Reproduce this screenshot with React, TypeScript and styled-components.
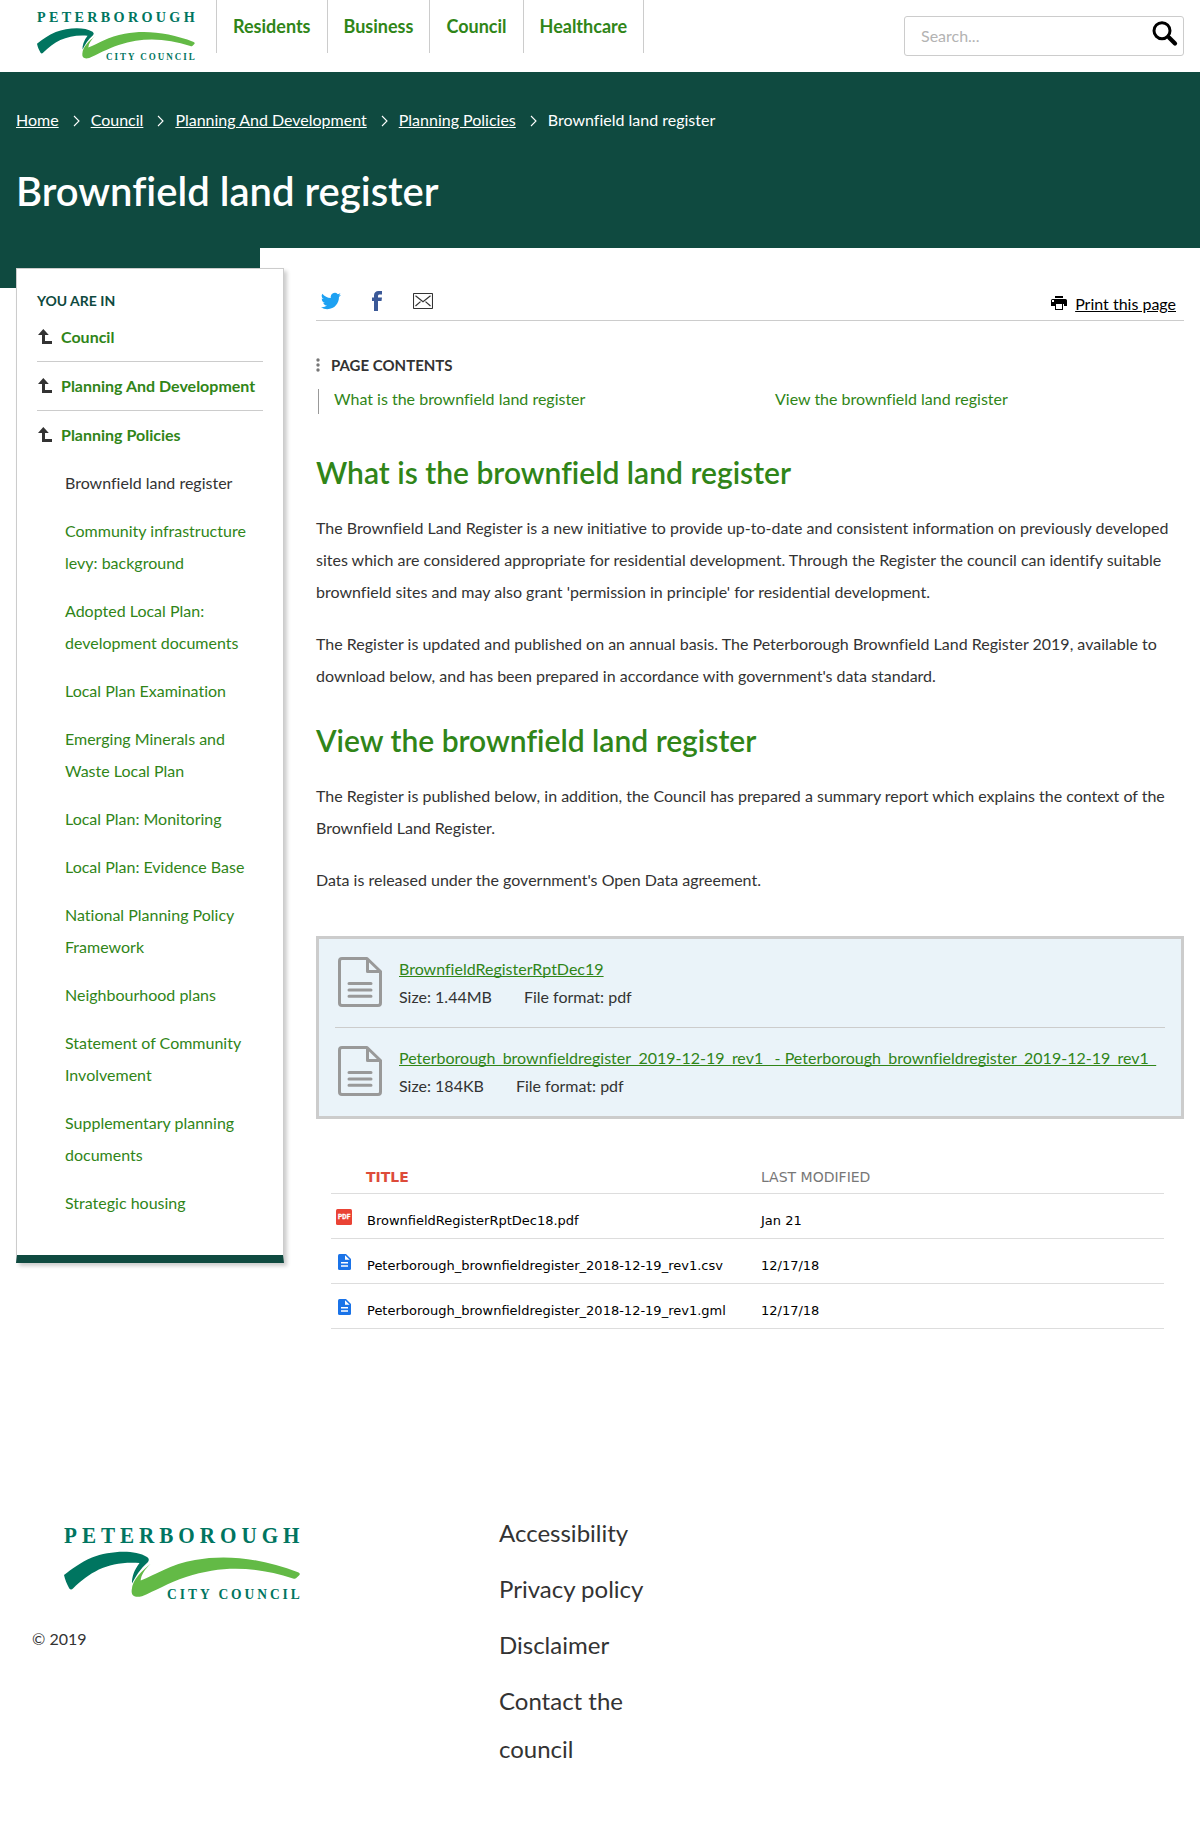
import React from 'react';
import styled, { createGlobalStyle } from 'styled-components';

const GREEN = '#308518';
const DARK = '#0f4a40';
const INK = '#333';
const LINE = '#ccc';

const GlobalStyle = createGlobalStyle`
  *, *::before, *::after { box-sizing: border-box; }
  body {
    margin: 0;
    background: #fff;
    color: ${INK};
    font: 16px/32px Lato, sans-serif;
    font-variant-ligatures: none;
  }
  a { color: ${GREEN}; text-decoration: none; }
  h1, h2, h3, p, ul { margin: 0; padding: 0; }
  ul { list-style: none; }
  svg { display: block; flex: none; }
`;

const Header = styled.header`
  display: flex;
  align-items: flex-start;
  height: 72px;
  padding: 0 16px 0 37px;
`;

const HeaderLogo = styled.a`
  padding-top: 11px;
  margin-right: 21px;
`;

const Nav = styled.nav`
  display: flex;
  height: 53px;
  border-left: 1px solid ${LINE};
`;

const NavLink = styled.a`
  padding: 10px 16px 0;
  border-right: 1px solid ${LINE};
  font-size: 18px;
  font-weight: 700;
`;

const SearchForm = styled.form`
  display: flex;
  width: 280px;
  height: 40px;
  margin: 16px 0 0 auto;
  border: 1px solid ${LINE};
  border-radius: 3px;
`;

const SearchInput = styled.input`
  flex: 1;
  min-width: 0;
  padding: 0 0 2px 16px;
  border: 0;
  background: none;
  font: 16px Lato, sans-serif;
  &::placeholder { color: #b3b3b3; opacity: 1; }
`;

const SearchButton = styled.button`
  display: flex;
  align-items: flex-start;
  width: 31px;
  padding: 4px 0 0 0;
  border: 0;
  background: none;
`;

const Hero = styled.section`
  height: 176px;
  padding: 32px 16px 0;
  background: ${DARK};
  color: #fff;
`;

const Crumbs = styled.ul`
  display: flex;
  height: 32px;
`;

const Crumb = styled.li`
  display: flex;
  align-items: center;
  a { color: #fff; text-decoration: underline; }
  svg { margin: 2px 11px 0 14px; }
`;

const PageTitle = styled.h1`
  margin-top: 25px;
  font-size: 40px;
  line-height: 60px;
  font-weight: 600;
`;

const Columns = styled.div`
  display: flex;
  align-items: flex-start;
  padding: 0 16px 0 0;
`;

const SideColumn = styled.div`
  width: 316px;
  padding: 20px 32px 0 16px;
  background: linear-gradient(${DARK}, ${DARK}) 0 0 / 260px 40px no-repeat;
`;

const SideCard = styled.aside`
  height: 995px;
  padding: 16px 20px 0;
  background: #fff;
  border: 1px solid ${LINE};
  border-bottom: 8px solid ${DARK};
  box-shadow: 3px 3px 4px rgba(0, 0, 0, 0.2);
`;

const SideHeading = styled.h3`
  color: ${DARK};
  font-size: 14px;
  font-weight: 700;
`;

const Parent = styled.li<{ $last?: boolean }>`
  display: flex;
  align-items: center;
  height: ${(p) => (p.$last ? 48 : 49)}px;
  border-bottom: ${(p) => (p.$last ? '0' : `1px solid ${LINE}`)};
  font-weight: 700;
  svg { margin: 0 9px 2px 1px; }
  &:first-child { height: 45px; padding-bottom: 4px; }
`;

const Child = styled.li<{ $current?: boolean }>`
  padding: 8px 0 8px 28px;
  color: ${(p) => (p.$current ? INK : GREEN)};
`;

const Main = styled.main`
  flex: 1;
  min-width: 0;
  padding-top: 36px;
`;

const ShareBar = styled.div`
  display: flex;
  justify-content: space-between;
  height: 37px;
  padding: 4px 8px 0 5px;
  border-bottom: 1px solid ${LINE};
`;

const ShareLinks = styled.div`
  display: flex;
  align-items: flex-start;
  padding-top: 3px;
  svg + svg { margin-left: 27px; }
  svg:last-child { margin: 2px 0 0 25px; }
`;

const PrintLink = styled.a`
  display: flex;
  gap: 8px;
  color: #000;
  span { text-decoration: underline; }
  svg { margin-top: 8px; }
`;

const ContentsHeading = styled.h3`
  display: flex;
  align-items: center;
  gap: 11px;
  margin-top: 28px;
  font-size: 15px;
  font-weight: 700;
`;

const ContentsList = styled.ul`
  display: grid;
  grid-template-columns: 441px 1fr;
  height: 25px;
  margin: 8px 0 0 2px;
  padding-left: 15px;
  border-left: 1px solid #999;
  line-height: 20px;
`;

const SectionTitle = styled.h2<{ $top: number }>`
  margin: ${(p) => p.$top}px 0 16px;
  color: ${GREEN};
  font-size: 30px;
  line-height: 48px;
  font-weight: 600;
`;

const Paragraph = styled.p`
  margin-bottom: 20px;
`;

const Downloads = styled.ul`
  margin-top: 40px;
  padding: 0 16px;
  border: 3px solid ${LINE};
  background: #eaf3f9;
`;

const Download = styled.li`
  display: flex;
  gap: 17px;
  height: 88px;
  padding: 18px 0 0 3px;
  white-space: nowrap;
  & + & { height: 89px; border-top: 1px solid ${LINE}; }
`;

const DownloadText = styled.div`
  margin-top: -2px;
  line-height: 28px;
  a { text-decoration: underline; text-decoration-skip-ink: none; }
`;

const Meta = styled.div`
  display: flex;
  gap: 32px;
`;

const FileTable = styled.div`
  width: 833px;
  margin: 49px 0 0 15px;
  font: 13px/20px 'DejaVu Sans', sans-serif;
  color: #000;
`;

const FileRow = styled.div`
  display: grid;
  grid-template-columns: 36px 394px 1fr;
  height: 45px;
  padding-top: 17px;
  border-bottom: 1px solid #ddd;
  svg { margin: -2px 0 0 5px; }
`;

const FileHead = styled(FileRow)`
  height: 26px;
  padding-top: 0;
  font-size: 14px;
  line-height: 18px;
`;

const HeadTitle = styled.span`
  margin-left: -1px;
  color: #dd4b39;
  font-weight: 700;
`;

const HeadDate = styled.span`
  color: #777;
`;

const Footer = styled.footer`
  display: grid;
  grid-template-columns: 467px 160px;
  height: 504px;
  padding: 180px 0 0 32px;
`;

const FooterLogo = styled.div`
  padding: 17px 0 0 32px;
  margin-bottom: 23px;
`;

const FooterLinks = styled.ul`
  font-size: 24px;
  line-height: 48px;
  li { margin-bottom: 8px; }
`;

const LogoSvg = styled.svg`
  overflow: visible;
  font-family: 'Liberation Serif', serif;
  font-weight: 700;
`;

function Logo({ width, height }: { width: number; height: number }) {
  return (
    <LogoSvg width={width} height={height} viewBox="0 0 236 74" preserveAspectRatio="none" fill="#007560">
      <text transform="scale(0.92 1)" x="0" y="16.600" fontSize="23" textLength="256">PETERBOROUGH</text>
      <path d="M0 49C8 43 17 36 28 31.500C45 25 70 23 83 31Q86 33 84 36C76 43 72 50 68 57.500C67.500 52 70 44 75.500 37C45 35 27 45 9 62.500Q7 64.500 5.300 62.500C3 58 1 54 0 49Z" />
      <path fill="#63ba46" d="M87 37.500C81 43 77 49 76.700 54.500C91 49 107 38 131 34C164 28 199 33 234 46.200Q237 47.500 235 49.500L232 52.300Q231 53 229 52.400C194 41.500 161 38 122 51C104 57 91 65 78 70.200C71 72 67 70 67.700 64C68.500 53 78 45 87 37.500Z" />
      <text transform="scale(0.9 1)" x="114.500" y="72.700" fontSize="15" textLength="147.500">CITY COUNCIL</text>
    </LogoSvg>
  );
}

const SearchIcon = () => (
  <svg width="26" height="26" viewBox="0 0 26 26" fill="none" stroke="#000">
    <circle cx="10" cy="9.700" r="8" strokeWidth="3" />
    <path d="M17 16.500L23 22.500" strokeWidth="4.200" strokeLinecap="round" />
    <path d="M15 14.500L18 17.500" strokeWidth="2.500" />
  </svg>
);

const Chevron = () => (
  <svg width="7" height="12" viewBox="0 0 7 12" fill="none" stroke="#fff" strokeWidth="1.100">
    <path d="M1 1L6 6L1 11" />
  </svg>
);

const UpIcon = () => (
  <svg width="14" height="15" viewBox="0 0 14 15" fill="#333">
    <path d="M5.300 0L10.800 6H7V12H14V15H4V6H0Z" />
  </svg>
);

const TwitterIcon = () => (
  <svg width="20" height="20" viewBox="0 0 24 24" fill="#1da1f2">
    <path d="M23.950 4.570a10 10 0 0 1-2.820.770 4.960 4.960 0 0 0 2.160-2.720c-.950.550-2 .950-3.130 1.180a4.920 4.920 0 0 0-8.380 4.480C7.690 8.100 4.070 6.130 1.640 3.160a4.920 4.920 0 0 0 1.520 6.570 4.900 4.900 0 0 1-2.230-.610v.060a4.920 4.920 0 0 0 3.950 4.830 5 5 0 0 1-2.210.080 4.940 4.940 0 0 0 4.600 3.420A9.870 9.870 0 0 1 0 19.540a14 14 0 0 0 7.550 2.210c9.050 0 14-7.500 14-13.980 0-.210 0-.420-.020-.630a9.940 9.940 0 0 0 2.420-2.570z" />
  </svg>
);

const FacebookIcon = () => (
  <svg width="20" height="20" viewBox="0 0 20 20" fill="#3b5998">
    <path d="M6 20V10H4V6.500H6V4.500C6 1.500 7.800 0 10.500 0H14V3.500H11.800C10.500 3.500 10 4.100 10 5V6.500H14L13.500 10H10V20Z" />
  </svg>
);

const MailIcon = () => (
  <svg width="20" height="16" viewBox="0 0 20 16" fill="none" stroke="#333">
    <rect x="0.500" y="0.500" width="19" height="15" rx="0.600" strokeWidth="1.100" />
    <path d="M2.500 2.800L10 8.800L17.500 2.800M2.500 13L7.500 8.600M17.500 13L12.500 8.600" strokeWidth="1.200" />
  </svg>
);

const PrintIcon = () => (
  <svg width="16" height="14" viewBox="0 0 16 14">
    <path d="M4 0H12V2H4ZM1.500 3H14.500Q16 3 16 4.500V10H13V8H4V10H0V4.500Q0 3 1.500 3Z" />
    <rect x="4.500" y="7.500" width="7" height="6" fill="#fff" stroke="#000" />
    <path fill="#fff" d="M1 4H3V6H1Z" />
  </svg>
);

const DotsIcon = () => (
  <svg width="4" height="14" viewBox="0 0 4 14" fill="#777">
    <circle cx="2" cy="2" r="1.700" />
    <circle cx="2" cy="7" r="1.700" />
    <circle cx="2" cy="12" r="1.700" />
  </svg>
);

const PageIcon = () => (
  <svg width="44" height="50" viewBox="0 0 44 50" fill="none" stroke="#999" strokeWidth="3" strokeLinejoin="round">
    <path d="M4 1.500H29L42.500 14.500V46Q42.500 48.500 40 48.500H4Q1.500 48.500 1.500 46V4Q1.500 1.500 4 1.500Z" />
    <path d="M29.500 2V14.500H42" />
    <path d="M11 26.500H33M11 33H33M11 39.300H33" strokeLinecap="round" />
  </svg>
);

const PdfIcon = () => (
  <svg width="16" height="16" viewBox="0 0 16 16">
    <rect width="16" height="16" rx="1.500" fill="#ea4335" />
    <text x="2" y="10.300" fontSize="6.500" fontWeight="700" fontFamily="Roboto, sans-serif" fill="#fff" stroke="#fff" strokeWidth="0.300" textLength="12.300">PDF</text>
  </svg>
);

const DocIcon = () => (
  <svg width="18" height="16" viewBox="0 0 18 16">
    <path fill="#1a73e8" d="M3.500 0H10L15 5V14.500Q15 16 13.500 16H3.500Q2 16 2 14.500V1.500Q2 0 3.500 0Z" />
    <path fill="#fff" d="M9 1.200V5.800H13.700ZM5 8H12V9.500H5ZM5 11.300H12V12.800H5Z" />
  </svg>
);

const navItems = ['Residents', 'Business', 'Council', 'Healthcare'];
const crumbs = ['Home', 'Council', 'Planning And Development', 'Planning Policies'];
const parents = ['Council', 'Planning And Development', 'Planning Policies'];
const children = [
  'Community infrastructure levy: background',
  'Adopted Local Plan: development documents',
  'Local Plan Examination',
  'Emerging Minerals and Waste Local Plan',
  'Local Plan: Monitoring',
  'Local Plan: Evidence Base',
  'National Planning Policy Framework',
  'Neighbourhood plans',
  'Statement of Community Involvement',
  'Supplementary planning documents',
  'Strategic housing',
];
const downloads = [
  { name: 'BrownfieldRegisterRptDec19', size: '1.44MB' },
  { name: 'Peterborough_brownfieldregister_2019-12-19_rev1_ - Peterborough_brownfieldregister_2019-12-19_rev1_', size: '184KB' },
];
const files = [
  { name: 'BrownfieldRegisterRptDec18.pdf', date: 'Jan 21', pdf: true },
  { name: 'Peterborough_brownfieldregister_2018-12-19_rev1.csv', date: '12/17/18', pdf: false },
  { name: 'Peterborough_brownfieldregister_2018-12-19_rev1.gml', date: '12/17/18', pdf: false },
];

export default function App() {
  return (
    <>
      <GlobalStyle />
      <Header>
        <HeaderLogo href="#"><Logo width={158} height={49.500} /></HeaderLogo>
        <Nav>
          {navItems.map((item) => <NavLink key={item} href="#">{item}</NavLink>)}
        </Nav>
        <SearchForm>
          <SearchInput placeholder="Search..." />
          <SearchButton type="button" aria-label="Search"><SearchIcon /></SearchButton>
        </SearchForm>
      </Header>
      <Hero>
        <Crumbs>
          {crumbs.map((c) => <Crumb key={c}><a href="#">{c}</a><Chevron /></Crumb>)}
          <Crumb>Brownfield land register</Crumb>
        </Crumbs>
        <PageTitle>Brownfield land register</PageTitle>
      </Hero>
      <Columns>
        <SideColumn>
          <SideCard>
            <SideHeading>YOU ARE IN</SideHeading>
            <ul>
              {parents.map((p, i) => (
                <Parent key={p} $last={i === parents.length - 1}><UpIcon /><a href="#">{p}</a></Parent>
              ))}
            </ul>
            <ul>
              <Child $current>Brownfield land register</Child>
              {children.map((c) => <Child key={c}><a href="#">{c}</a></Child>)}
            </ul>
          </SideCard>
        </SideColumn>
        <Main>
          <ShareBar>
            <ShareLinks><TwitterIcon /><FacebookIcon /><MailIcon /></ShareLinks>
            <PrintLink href="#"><PrintIcon /><span>Print this page</span></PrintLink>
          </ShareBar>
          <ContentsHeading><DotsIcon />PAGE CONTENTS</ContentsHeading>
          <ContentsList>
            <li><a href="#">What is the brownfield land register</a></li>
            <li><a href="#">View the brownfield land register</a></li>
          </ContentsList>
          <SectionTitle $top={34}>What is the brownfield land register</SectionTitle>
          <Paragraph>The Brownfield Land Register is a new initiative to provide up-to-date and consistent information on previously developed sites which are considered appropriate for residential development. Through the Register the council can identify suitable brownfield sites and may also grant 'permission in principle' for residential development.</Paragraph>
          <Paragraph>The Register is updated and published on an annual basis. The Peterborough Brownfield Land Register 2019, available to download below, and has been prepared in accordance with government's data standard.</Paragraph>
          <SectionTitle $top={24}>View the brownfield land register</SectionTitle>
          <Paragraph>The Register is published below, in addition, the Council has prepared a summary report which explains the context of the Brownfield Land Register.</Paragraph>
          <Paragraph>Data is released under the government's Open Data agreement.</Paragraph>
          <Downloads>
            {downloads.map((d) => (
              <Download key={d.name}>
                <PageIcon />
                <DownloadText>
                  <a href="#">{d.name}</a>
                  <Meta><span>Size: {d.size}</span><span>File format: pdf</span></Meta>
                </DownloadText>
              </Download>
            ))}
          </Downloads>
          <FileTable>
            <FileHead><span /><HeadTitle>TITLE</HeadTitle><HeadDate>LAST MODIFIED</HeadDate></FileHead>
            {files.map((f) => (
              <FileRow key={f.name}>
                {f.pdf ? <PdfIcon /> : <DocIcon />}
                <span>{f.name}</span>
                <span>{f.date}</span>
              </FileRow>
            ))}
          </FileTable>
        </Main>
      </Columns>
      <Footer>
        <div>
          <FooterLogo><Logo width={236} height={74} /></FooterLogo>
          © 2019
        </div>
        <FooterLinks>
          <li>Accessibility</li>
          <li>Privacy policy</li>
          <li>Disclaimer</li>
          <li>Contact the council</li>
        </FooterLinks>
      </Footer>
    </>
  );
}
